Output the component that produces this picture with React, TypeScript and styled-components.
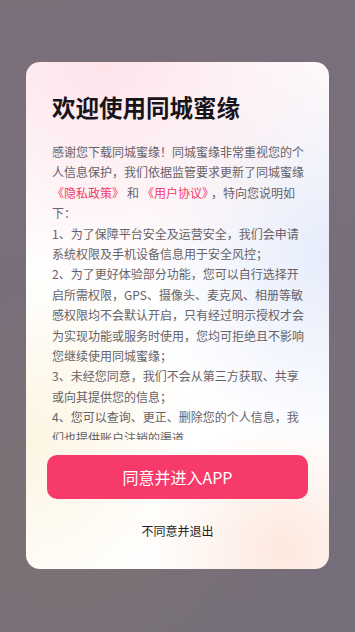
import * as React from 'react';
import styled, { createGlobalStyle } from 'styled-components';

const GlobalStyle = createGlobalStyle`
    html, body, #root {
        margin: 0;
        padding: 0;
        height: 100%;
    }
    body {
        font-family: 'Noto Sans CJK SC', 'Noto Sans', sans-serif;
        -webkit-font-smoothing: antialiased;
    }
`;

const Backdrop = styled.div`
    width: 100%;
    height: 100%;
    min-height: 632px;
    box-sizing: border-box;
    padding: 62px 26px 0;
    background:
        radial-gradient(circle at 20% 85%, rgba(130, 118, 110, 0.5), transparent 40%),
        radial-gradient(circle at 85% 15%, rgba(120, 110, 125, 0.4), transparent 45%),
        linear-gradient(180deg, #7b6f7a 0%, #786f7a 60%, #756e7b 100%);
`;

const Card = styled.div`
    width: 303px;
    height: 507px;
    box-sizing: border-box;
    border-radius: 14px;
    overflow: hidden;
    display: flex;
    flex-direction: column;
    padding: 30px 0 0;
    background:
        radial-gradient(ellipse 90% 45% at 25% 0%, rgba(253, 228, 234, 1), rgba(253, 228, 234, 0) 100%),
        radial-gradient(ellipse 60% 40% at 100% 38%, rgba(230, 236, 251, 1), rgba(230, 236, 251, 0) 100%),
        radial-gradient(ellipse 55% 35% at 0% 75%, rgba(253, 245, 226, 1), rgba(253, 245, 226, 0) 100%),
        radial-gradient(ellipse 45% 25% at 85% 96%, rgba(253, 232, 222, 1), rgba(253, 232, 222, 0) 100%),
        #ffffff;
`;

const Title = styled.h1`
    margin: 0 0 20px;
    padding: 0 26px;
    font-size: 23.5px;
    line-height: 30px;
    font-weight: 700;
    color: #17141a;
`;

const Scroll = styled.div`
    height: 298px;
    overflow: hidden;
    padding: 0 25px 0 26px;
`;

const Paragraph = styled.p`
    margin: 0;
    font-size: 12px;
    line-height: 20.4px;
    color: #666268;
`;

const Link = styled.span`
    color: #f5396b;
    margin: 0 3px;

    &:first-child {
        margin-left: 0;
    }
`;

const Actions = styled.div`
    display: flex;
    flex-direction: column;
    align-items: center;
    padding: 15px 21px 0;
`;

const PrimaryButton = styled.button`
    width: 100%;
    height: 44px;
    border: none;
    border-radius: 10px;
    background: #f63a69;
    color: #ffffff;
    font-family: 'Noto Sans CJK SC', 'Noto Sans', sans-serif;
    font-size: 16px;
    cursor: pointer;
`;

const TextButton = styled.button`
    margin-top: 23px;
    border: none;
    background: none;
    padding: 0;
    font-family: 'Noto Sans CJK SC', 'Noto Sans', sans-serif;
    font-size: 12px;
    line-height: 18px;
    color: #1d1b20;
    cursor: pointer;
`;

export default function App() {
    return (
        <>
            <GlobalStyle />
            <Backdrop>
                <Card>
                    <Title>欢迎使用同城蜜缘</Title>
                    <Scroll>
                        <Paragraph>
                            感谢您下载同城蜜缘！同城蜜缘非常重视您的个人信息保护，我们依据监管要求更新了同城蜜缘
                            <Link>《隐私政策》</Link>和<Link>《用户协议》</Link>，特向您说明如下：
                        </Paragraph>
                        <Paragraph>1、为了保障平台安全及运营安全，我们会申请系统权限及手机设备信息用于安全风控；</Paragraph>
                        <Paragraph>
                            2、为了更好体验部分功能，您可以自行选择开启所需权限，GPS、摄像头、麦克风、相册等敏感权限均不会默认开启，只有经过明示授权才会为实现功能或服务时使用，您均可拒绝且不影响您继续使用同城蜜缘；
                        </Paragraph>
                        <Paragraph>3、未经您同意，我们不会从第三方获取、共享或向其提供您的信息；</Paragraph>
                        <Paragraph>4、您可以查询、更正、删除您的个人信息，我们也提供账户注销的渠道。</Paragraph>
                    </Scroll>
                    <Actions>
                        <PrimaryButton>同意并进入APP</PrimaryButton>
                        <TextButton>不同意并退出</TextButton>
                    </Actions>
                </Card>
            </Backdrop>
        </>
    );
}
